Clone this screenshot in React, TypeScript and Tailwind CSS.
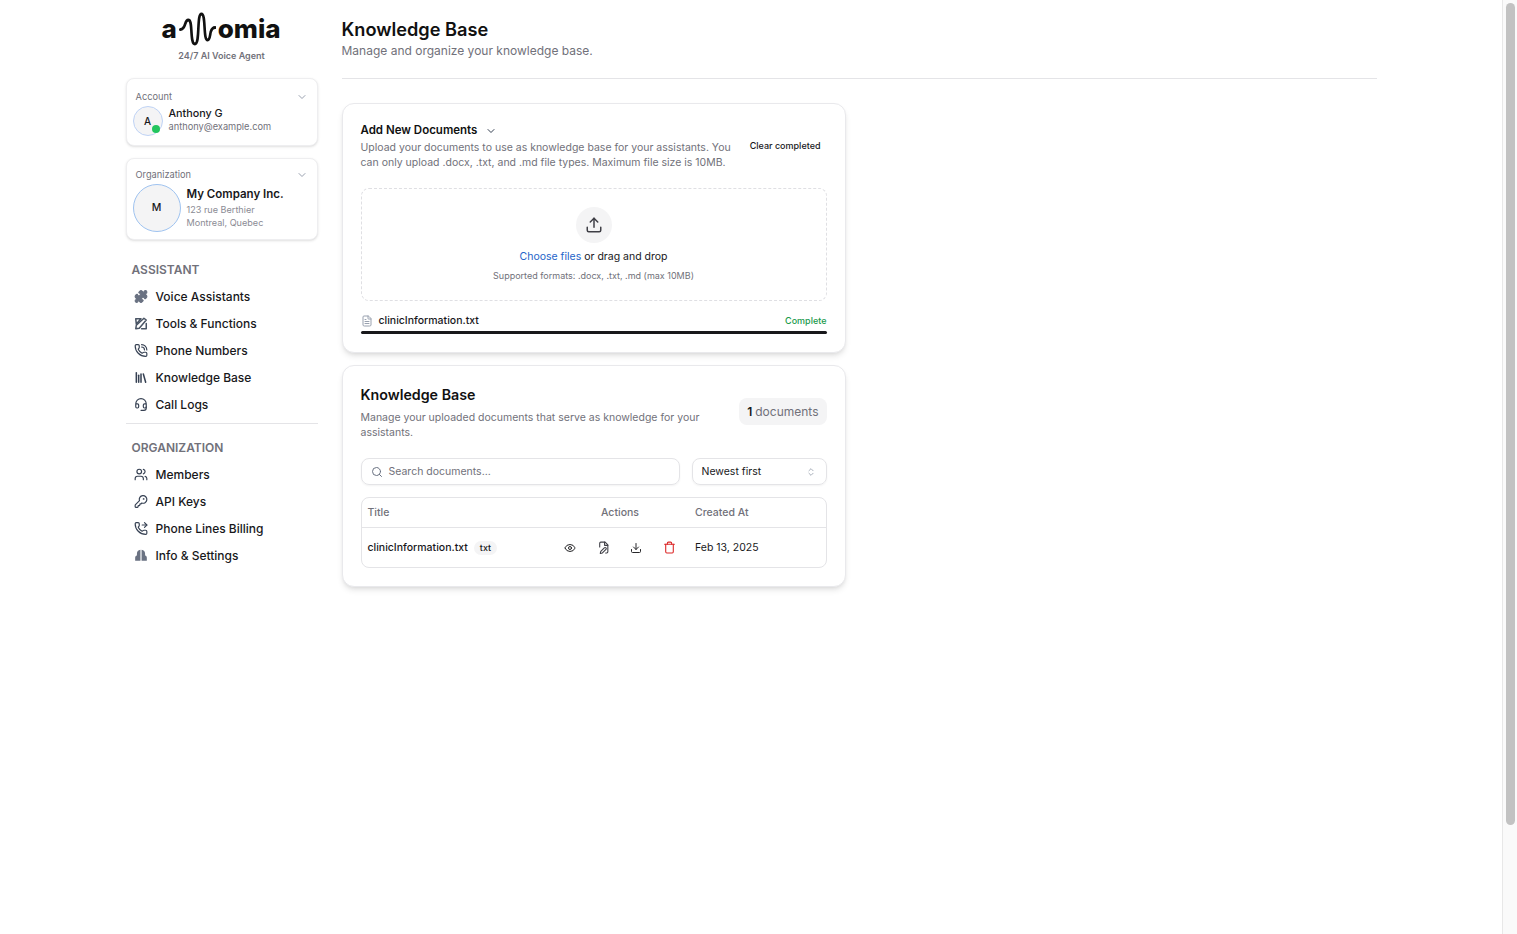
import { ChevronDown, ChevronsUpDown, Download, Eye, FileText, Headset, KeyRound, Library, PhoneCall, PhoneForwarded, Puzzle, Search, Trash, Upload, Users } from 'lucide-react';
import type { ReactNode } from 'react';

// Logo wave between the "a" and "omia"
const LogoWave = () => (
  <svg width="37" height="34" viewBox="0 0 42 34" preserveAspectRatio="none" fill="none" className="shrink-0 mx-[2px]">
    <path
      d="M1.5 17.5C5 17.500 6 15 7 12C8 9 9 8 10.500 8C13 8 13.500 11 14 18C14.500 26 15 32 18 32C21 32 21.500 26 22 16C22.500 7 23 2 25.500 2C28 2 28.500 7 29 15C29.500 23 30 28 32.500 28C35 28 35 24 36 20C37 17 38.500 15.500 41 15.500"
      stroke="#111"
      strokeWidth="3"
      strokeLinecap="round"
    />
  </svg>
);

const ToolsIcon = () => (
  <svg viewBox="0 0 24 24" className="w-[15px] h-[15px] text-gray-600" fill="none" stroke="currentColor" strokeWidth="2.6" strokeLinecap="round" strokeLinejoin="round">
    <path d="M3 4h9L4 13z" />
    <path d="M21 6 9 20l-6 1 1-6L17 3z" />
    <path d="M21 12v9h-8" />
  </svg>
);

const BuildingIcon = () => (
  <svg viewBox="0 0 24 24" className="w-[15px] h-[15px] text-gray-500" fill="currentColor">
    <path d="M11 2C7 2.300 5 5 5 9v3c-2 .4-3 2-3 4v5h9z" />
    <path d="M13 2c4 .3 6 3 6 7v3c2 .4 3 2 3 4v5h-9z" />
  </svg>
);

// document with a pencil over its lower left corner
const FileEditIcon = () => (
  <svg viewBox="0 0 24 24" className="w-[13px] h-[13px] text-[#3f3f46]" fill="none" stroke="currentColor" strokeWidth="2" strokeLinecap="round" strokeLinejoin="round">
    <path d="M5 11V4a2 2 0 0 1 2-2h8l5 5v13a2 2 0 0 1-2 2h-2" />
    <path d="M14 2v6h6" />
    <path d="M13.500 12.500a2 2 0 0 1 3 3L10 22l-4 1 1-4z" />
  </svg>
);

const navIconClass = 'w-[15px] h-[15px] text-gray-700';

const NavItem = ({ icon, label }: { icon: ReactNode; label: string }) => (
  <div className="flex items-center gap-2 h-[27px] pl-2">
    <span className="w-[14px] flex justify-center">{icon}</span>
    <span className="text-xs font-medium text-[#18181b]">{label}</span>
  </div>
);

const SectionLabel = ({ children }: { children: ReactNode }) => (
  <div className="pl-[6px] text-xs font-semibold text-[#71717a] leading-4">{children}</div>
);

const Sidebar = () => (
  <aside className="w-[192px] shrink-0">
    <div className="flex flex-col items-center h-[78px] pt-3">
      <div className="flex items-center h-[34px] text-[26px] leading-none font-extrabold text-[#111] -ml-[1px]">
        <span>a</span>
        <LogoWave />
        <span>omia</span>
      </div>
      <div className="mt-[4px] text-[9px] leading-3 font-semibold text-[#71717a]">24/7 AI Voice Agent</div>
    </div>

    <div className="h-[68px] rounded-lg border border-[#eeeef0] bg-white shadow-sm px-[6px] pt-3">
      <div className="flex items-center justify-between pl-[3px] pr-[3px]">
        <span className="text-[9.250px] leading-3 text-[#71717a]">Account</span>
        <ChevronDown className="w-3 h-3 text-gray-400" />
      </div>
      <div className="flex items-start gap-[6px] mt-[3px]">
        <div className="relative w-[30px] h-[30px] rounded-full border border-[#bfd3f5] bg-[#f4f4f5] flex items-center justify-center text-[10px] font-medium text-[#18181b]">
          A
          <span className="absolute right-[2px] bottom-[2px] w-2 h-2 rounded-full bg-[#22c55e]" />
        </div>
        <div className="mt-[1px]">
          <div className="text-[10.750px] leading-[14px] font-medium text-[#18181b]">Anthony G</div>
          <div className="text-[9.250px] leading-[12px] text-[#71717a]">anthony@example.com</div>
        </div>
      </div>
    </div>

    <div className="mt-3 h-[82px] rounded-lg border border-[#eeeef0] bg-white shadow-sm px-[6px] pt-[10px]">
      <div className="flex items-center justify-between pl-[3px] pr-[3px]">
        <span className="text-[9.250px] leading-3 text-[#71717a]">Organization</span>
        <ChevronDown className="w-3 h-3 text-gray-400" />
      </div>
      <div className="flex items-center gap-[6px] mt-[3px]">
        <div className="w-[48px] h-[48px] shrink-0 rounded-full border-[1.5px] border-[#9fc3f0] bg-[#f4f4f5] flex items-center justify-center text-[10.500px] font-medium text-[#18181b]">
          M
        </div>
        <div className="mb-[2px]">
          <div className="text-[11.500px] leading-4 font-semibold text-[#18181b]">My Company Inc.</div>
          <div className="mt-[1px] text-[9.100px] leading-[13px] text-[#8b8b94]">123 rue Berthier</div>
          <div className="text-[9.100px] leading-[13px] text-[#8b8b94]">Montreal, Quebec</div>
        </div>
      </div>
    </div>

    <div className="mt-[22px]">
      <SectionLabel>ASSISTANT</SectionLabel>
      <div className="mt-[5px] flex flex-col">
        <NavItem icon={<Puzzle className="w-[15px] h-[15px] text-gray-500 fill-current" />} label="Voice Assistants" />
        <NavItem icon={<ToolsIcon />} label="Tools & Functions" />
        <NavItem icon={<PhoneCall className={navIconClass} />} label="Phone Numbers" />
        <NavItem icon={<Library className={navIconClass} strokeWidth={2.6} />} label="Knowledge Base" />
        <NavItem icon={<Headset className={navIconClass} />} label="Call Logs" />
      </div>
    </div>

    <div className="mt-[5px] border-t border-[#e4e4e7] pt-4">
      <SectionLabel>ORGANIZATION</SectionLabel>
      <div className="mt-[5px] flex flex-col">
        <NavItem icon={<Users className={navIconClass} />} label="Members" />
        <NavItem icon={<KeyRound className={navIconClass} />} label="API Keys" />
        <NavItem icon={<PhoneForwarded className={navIconClass} />} label="Phone Lines Billing" />
        <NavItem icon={<BuildingIcon />} label="Info & Settings" />
      </div>
    </div>
  </aside>
);

const UploadCard = () => (
  <section className="h-[250px] rounded-xl border border-[#e9e9ec] bg-white shadow-md px-[18px] pt-[18px]">
    <div className="flex justify-between">
      <div className="w-[372px]">
        <div className="flex items-center gap-2 h-4 mt-[1px]">
          <h3 className="text-[11.500px] font-semibold text-[#111]">Add New Documents</h3>
          <ChevronDown className="w-3 h-3 text-gray-700" />
        </div>
        <p className="mt-[1px] text-[10.500px] leading-[15px] text-[#71717a]">
          Upload your documents to use as knowledge base for your assistants. You can only upload .docx, .txt, and .md file types. Maximum file size is 10MB.
        </p>
      </div>
      <span className="mt-[17px] mr-[6px] text-[9px] leading-[14px] font-medium text-[#18181b]">Clear completed</span>
    </div>

    <div className="mt-[18px] h-[113px] rounded-lg border border-dashed border-[#dfdfe3] flex flex-col items-center pt-[18px]">
      <div className="w-9 h-9 rounded-full bg-[#f4f4f5] flex items-center justify-center">
        <Upload className="w-[18px] h-[18px] text-[#3f3f46]" />
      </div>
      <div className="mt-[6px] text-[10.500px] leading-[15px] text-[#18181b]">
        <span className="text-[#2563c9]">Choose files</span> or drag and drop
      </div>
      <div className="mt-[5px] text-[9px] leading-[14px] text-[#71717a]">Supported formats: .docx, .txt, .md (max 10MB)</div>
    </div>

    <div className="mt-[13px] flex items-center justify-between h-[14px]">
      <div className="flex items-center gap-[6px]">
        <FileText className="w-3 h-3 text-gray-400" />
        <span className="text-[10.500px] font-medium text-[#18181b]">clinicInformation.txt</span>
      </div>
      <span className="text-[9px] font-medium text-[#1a9a4c]">Complete</span>
    </div>
    <div className="mt-[3px] h-[3px] rounded-full bg-[#18181b]" />
  </section>
);

const LibraryCard = () => (
  <section className="mt-3 h-[222px] rounded-xl border border-[#e9e9ec] bg-white shadow-md px-[18px] pt-[19px]">
    <div className="flex justify-between">
      <div className="w-[350px]">
        <h3 className="text-[14.250px] leading-5 font-semibold text-[#111]">Knowledge Base</h3>
        <p className="mt-[5px] text-[10.500px] leading-[15px] text-[#71717a]">
          Manage your uploaded documents that serve as knowledge for your assistants.
        </p>
      </div>
      <div className="mt-[13px] h-[27px] px-2 rounded-lg bg-[#f4f4f5] flex items-center gap-[3px] text-xs text-[#71717a]">
        <span className="font-semibold text-[#18181b]">1</span> documents
      </div>
    </div>

    <div className="mt-[18px] flex gap-3">
      <div className="flex-1 h-[27px] rounded-lg border border-[#e4e4e7] shadow-xs flex items-center px-[9px] gap-[6px]">
        <Search className="w-3 h-3 text-gray-500" />
        <span className="text-[10.500px] text-[#71717a]">Search documents...</span>
      </div>
      <div className="w-[135px] h-[27px] rounded-lg border border-[#e4e4e7] shadow-xs flex items-center justify-between pl-[9px] pr-[10px]">
        <span className="text-[10.500px] text-[#18181b]">Newest first</span>
        <ChevronsUpDown className="w-[10px] h-[10px] text-gray-400" />
      </div>
    </div>

    <div className="mt-3 h-[71px] rounded-lg border border-[#e4e4e7]">
      <div className="h-[30px] border-b border-[#e4e4e7] flex items-center text-[10.500px] font-medium text-[#71717a]">
        <span className="w-[239.500px] pl-[6px]">Title</span>
        <span className="w-[94px]">Actions</span>
        <span>Created At</span>
      </div>
      <div className="h-[39px] flex items-center text-[10.500px] text-[#18181b]">
        <div className="w-[194.500px] pl-[6px] flex items-center gap-[6px] font-medium">
          clinicInformation.txt
          <span className="h-[14px] px-[6px] rounded-full bg-[#f4f4f5] text-[9px] leading-[14px]">txt</span>
        </div>
        <div className="w-[139px] flex items-center pl-[8px]">
          <span className="w-[33px]"><Eye className="w-3 h-3 text-[#27272a]" /></span>
          <span className="w-[33px]"><FileEditIcon /></span>
          <span className="w-[33px]"><Download className="w-3 h-3 text-[#27272a]" /></span>
          <span><Trash className="w-[13px] h-[13px] text-[#dc2626]" /></span>
        </div>
        <span>Feb 13, 2025</span>
      </div>
    </div>
  </section>
);

export default function App() {
  return (
    <div className="h-screen overflow-hidden flex bg-white font-['Inter',sans-serif]">
      <div className="flex-1 min-w-0">
        <div className="w-[1251px] mx-auto flex gap-6">
          <Sidebar />
          <main className="flex-1 min-w-0 pt-[17px]">
            <header className="h-[62px] border-b border-[#e4e4e7]">
              <h1 className="text-[18.200px] leading-6 font-semibold text-[#111]">Knowledge Base</h1>
              <p className="mt-[2px] text-xs leading-4 text-[#71717a]">Manage and organize your knowledge base.</p>
            </header>
            <div className="mt-6 w-[504px]">
              <UploadCard />
              <LibraryCard />
            </div>
          </main>
        </div>
      </div>

      {/* window scrollbar */}
      <div className="w-[15px] shrink-0 h-full bg-[#fafafa] border-l border-[#e8e8e8] pt-[3px] pl-[3px] pr-[2px]">
        <div className="h-[822px] rounded-full bg-[#c2c2c2]" />
      </div>
    </div>
  );
}
